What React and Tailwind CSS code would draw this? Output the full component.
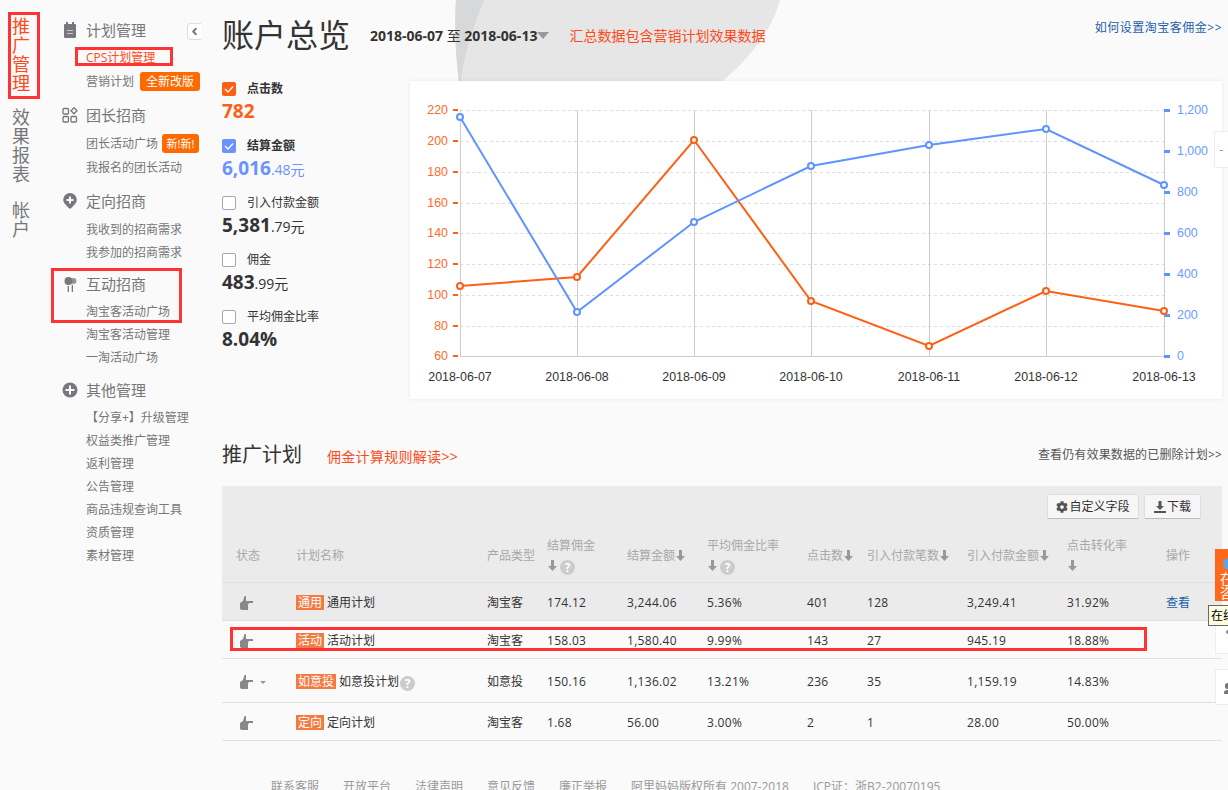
import { ChevronLeft } from "lucide-react";
import { FaCog } from "react-icons/fa";

const FONT = { fontFamily: '"Open Sans", "Noto Sans CJK SC", sans-serif' };

const navGroups = [
  { title: "计划管理", icon: "plan", mt: "mt-0", head: "h-[30px]", items: [
    { label: "CPS计划管理", active: true },
    { label: "营销计划", badge: "全新改版" },
  ] },
  { title: "团长招商", icon: "grid", mt: "mt-[7px]", head: "h-[30px]", items: [
    { label: "团长活动广场", badge: "新!新!", tight: true },
    { label: "我报名的团长活动" },
  ] },
  { title: "定向招商", icon: "pin", mt: "mt-[7px]", head: "h-[32px]", items: [
    { label: "我收到的招商需求" },
    { label: "我参加的招商需求" },
  ] },
  { title: "互动招商", icon: "balloon", mt: "mt-[6px]", head: "h-[30px]", items: [
    { label: "淘宝客活动广场" },
    { label: "淘宝客活动管理" },
    { label: "一淘活动广场" },
  ] },
  { title: "其他管理", icon: "plus", mt: "mt-[7px]", head: "h-[30px]", items: [
    { label: "【分享+】升级管理" },
    { label: "权益类推广管理" },
    { label: "返利管理" },
    { label: "公告管理" },
    { label: "商品违规查询工具" },
    { label: "资质管理" },
    { label: "素材管理" },
  ] },
];

const stats = [
  { label: "点击数", on: "bg-[#ff5f15]", big: "782", small: "", color: "text-[#ff5f15]", bold: true },
  { label: "结算金额", on: "bg-[#6a93ff]", big: "6,016", small: ".48元", color: "text-[#6a93ff]", bold: true },
  { label: "引入付款金额", big: "5,381", small: ".79元", color: "text-[#333]" },
  { label: "佣金", big: "483", small: ".99元", color: "text-[#333]" },
  { label: "平均佣金比率", big: "8.04%", small: "", color: "text-[#333]" },
];

const rows = [
  { tag: "通用", name: "通用计划", type: "淘宝客", vals: ["174.12", "3,244.06", "5.36%", "401", "128", "3,249.41", "31.92%"], op: "查看", h: "h-[38px]", bg: "bg-[#ebebeb]" },
  { tag: "活动", name: "活动计划", type: "淘宝客", vals: ["158.03", "1,580.40", "9.99%", "143", "27", "945.19", "18.88%"], h: "h-[38px]" },
  { tag: "如意投", name: "如意投计划", type: "如意投", vals: ["150.16", "1,136.02", "13.21%", "236", "35", "1,159.19", "14.83%"], h: "h-[44px]", caret: true, help: true },
  { tag: "定向", name: "定向计划", type: "淘宝客", vals: ["1.68", "56.00", "3.00%", "2", "1", "28.00", "50.00%"], h: "h-[38px]" },
];

const footerLinks = ["联系客服", "开放平台", "法律声明", "意见反馈", "廉正举报", "阿里妈妈版权所有 2007-2018", "ICP证：浙B2-20070195"];

function NavIcon({ name }) {
  const cls = "w-[16px] h-[16px] text-[#77777c]";
  if (name === "plan") {
    return (
      <svg viewBox="0 0 16 16" className={cls} fill="currentColor">
        <path d="M4 0h2v2h4V0h2v2h1a1 1 0 0 1 1 1v12a1 1 0 0 1-1 1H3a1 1 0 0 1-1-1V3a1 1 0 0 1 1-1h1z" />
        <path d="M5 8h6v1H5zM5 11h6v1H5z" fill="#c8c8c8" />
      </svg>
    );
  }
  if (name === "grid") {
    return (
      <svg viewBox="0 0 16 16" className={cls} fill="none" stroke="currentColor" strokeWidth="1.3">
        <rect x="1" y="1.5" width="5.5" height="5.5" rx="1" />
        <path d="M12 .8l3 3-3 3-3-3z" />
        <rect x="1" y="9.5" width="5.5" height="5.5" rx="1" />
        <rect x="9" y="9.5" width="5.5" height="5.5" rx="1" />
      </svg>
    );
  }
  if (name === "pin") {
    return (
      <svg viewBox="0 0 16 16" className={cls} fill="currentColor">
        <path d="M8 0a6.800 6.800 0 0 1 6.800 6.800C14.800 10 11 13.500 8 16 5 13.500 1.200 10 1.200 6.800A6.800 6.800 0 0 1 8 0z" />
        <path d="M7 3.500h2V6h2.500v2H9v2.500H7V8H4.500V6H7z" fill="#fafafa" />
      </svg>
    );
  }
  if (name === "balloon") {
    return (
      <svg viewBox="0 0 16 16" className={cls} fill="currentColor">
        <circle cx="11.500" cy="5" r="3" opacity="0.75" />
        <circle cx="6.500" cy="5" r="4" />
        <path d="M5.700 10h1.300v6H5.700zM9.700 9h1.300v7H9.700z" />
      </svg>
    );
  }
  return (
    <svg viewBox="0 0 16 16" className={cls} fill="currentColor">
      <circle cx="8" cy="8" r="7.500" />
      <path d="M7 3.500h2V7h3.500v2H9v3.500H7V9H3.500V7H7z" fill="#fafafa" />
    </svg>
  );
}

function NavGroup({ group }) {
  return (
    <div className={group.mt}>
      <div className={`flex items-center pb-[2px] text-[15px] text-[#777] ${group.head}`}>
        <span className="w-[24px] flex"><NavIcon name={group.icon} /></span>
        {group.title}
      </div>
      {group.items.map((item) => (
        <div key={item.label} className={`flex items-center pl-[24px] text-[12px] whitespace-nowrap ${item.badge ? "h-[25px]" : "h-[23px]"} ${item.active ? "text-[#ff4a1a]" : "text-[#777]"}`}>
          {item.label}
          {item.badge && (
            <span className={`bg-[#ff6a00] text-white rounded-[3px] h-[19px] leading-[19px] text-center ${item.tight ? "ml-[4px] w-[37px] text-[11px]" : "ml-[6px] w-[60px]"}`}>
              {item.badge}
            </span>
          )}
        </div>
      ))}
    </div>
  );
}

function CheckBox({ on }) {
  if (on) {
    return (
      <span className={`w-[14px] h-[14px] rounded-[2px] flex items-center justify-center ${on}`}>
        <svg viewBox="0 0 14 14" className="w-[14px] h-[14px]" fill="none" stroke="#fff" strokeWidth="1.300">
          <path d="M3 7l3 3 5-5.500" />
        </svg>
      </span>
    );
  }
  return <span className="w-[14px] h-[14px] rounded-[2px] border border-[#a5a5b5] bg-white" />;
}

function Stat({ stat }) {
  return (
    <div className="h-[57px]">
      <div className="flex items-center h-[15px]">
        <CheckBox on={stat.on} />
        <span className={`ml-[11px] text-[12px] text-[#333] ${stat.bold ? "font-bold" : ""}`}>{stat.label}</span>
      </div>
      <div className={`mt-[3px] h-[24px] leading-[24px] whitespace-nowrap ${stat.color}`}>
        <span className="text-[19px] font-bold">{stat.big}</span>
        <span className="text-[14px]">{stat.small}</span>
      </div>
    </div>
  );
}

const xs = [460, 577, 694, 811, 929, 1046, 1164];
const labels = ["2018-06-07", "2018-06-08", "2018-06-09", "2018-06-10", "2018-06-11", "2018-06-12", "2018-06-13"];
const orange = [286, 277, 140, 301, 346, 291, 311];
const blue = [117, 312, 222, 166, 145, 129, 185];
const leftTicks = [[220, 110], [200, 141], [180, 172], [160, 203], [140, 233], [120, 264], [100, 295], [80, 326], [60, 356]];
const rightTicks = [["1,200", 110], ["1,000", 151], ["800", 192], ["600", 233], ["400", 274], ["200", 315], ["0", 356]];

function Chart() {
  const line = (ys) => xs.map((x, i) => `${x},${ys[i]}`).join(" ");
  return (
    <svg viewBox="410 81 812 318" className="w-[812px] h-[318px] block" style={{ fontFamily: '"Liberation Sans", sans-serif', fontSize: 12.4 }}>
      {leftTicks.map(([v, y]) => (
        <g key={v}>
          {y !== 356 && <line x1="460" x2="1164" y1={y + 0.5} y2={y + 0.5} stroke="#ddd" strokeDasharray="3 3" />}
          <rect x="453" y={y - 1} width="5" height="2" fill="#ff5f15" />
          <text x="448" y={y + 4} textAnchor="end" fill="#ff6a2a">{v}</text>
        </g>
      ))}
      {xs.map((x) => <line key={x} x1={x + 0.5} x2={x + 0.5} y1="110" y2="356" stroke="#ccc" />)}
      <line x1="460" x2="1164" y1="356.500" y2="356.500" stroke="#ccc" />
      {rightTicks.map(([v, y]) => (
        <g key={v}>
          <rect x="1164" y={y - 1} width="6" height="3" fill="#5f93ff" />
          <text x="1177" y={y + 4} fill="#6a9bff">{v}</text>
        </g>
      ))}
      {labels.map((l, i) => <text key={l} x={xs[i]} y="381" textAnchor="middle" fill="#333">{l}</text>)}
      <polyline points={line(orange)} fill="none" stroke="#ff5f15" strokeWidth="2" />
      <polyline points={line(blue)} fill="none" stroke="#5f93ff" strokeWidth="2" />
      {xs.map((x, i) => <circle key={x} cx={x} cy={orange[i]} r="3" fill="#fff" stroke="#ff5f15" strokeWidth="2" />)}
      {xs.map((x, i) => <circle key={x} cx={x} cy={blue[i]} r="3" fill="#fff" stroke="#5f93ff" strokeWidth="2" />)}
    </svg>
  );
}

function SortArrow() {
  return (
    <svg viewBox="0 0 9 11" className="inline-block w-[9px] h-[11px] align-[-1px] ml-[1px]" fill="#999">
      <path d="M3 0h3v6h3L4.500 11 0 6h3z" />
    </svg>
  );
}

function Help() {
  return (
    <span className="inline-flex items-center justify-center w-[15px] h-[15px] rounded-full bg-[#ccc] text-white text-[12px] font-bold leading-none align-[-2px]">?</span>
  );
}

function Hand() {
  return (
    <svg viewBox="0 0 13 14" className="w-[13px] h-[14px]" fill="#888">
      <path d="M4.500 0h1.500v5h7v2H8.500v1.500H8V14H1.500L0 13V7l3-2z" />
    </svg>
  );
}

function PlanTable() {
  const heads = [
    { t: "状态", cls: "pl-[14px]" },
    { t: "计划名称" },
    { t: "产品类型" },
    { t: "结算佣金", wrap: true, help: true },
    { t: "结算金额", arrow: true },
    { t: "平均佣金比率", wrap: true, help: true },
    { t: "点击数", arrow: true },
    { t: "引入付款笔数", arrow: true },
    { t: "引入付款金额", arrow: true },
    { t: "点击转化率", wrap: true },
    { t: "操作" },
  ];
  const widths = ["w-[74px]", "w-[191px]", "w-[60px]", "w-[80px]", "w-[80px]", "w-[100px]", "w-[60px]", "w-[100px]", "w-[100px]", "w-[99px]", "w-[56px]"];
  return (
    <table className="w-[1000px] table-fixed border-collapse text-[12px] text-[#333]">
      <colgroup>
        {widths.map((w, i) => <col key={i} className={w} />)}
      </colgroup>
      <thead>
        <tr className="h-[56px] bg-[#ebebeb] border-b border-[#e0e0e0] text-[#a8a8a8] text-left">
          {heads.map((h) => (
            <th key={h.t} className={`font-normal leading-[20px] pt-[4px] ${h.cls || ""}`}>
              {h.t}
              {h.wrap && <br />}
              {(h.arrow || h.wrap) && <SortArrow />}
              {h.help && <span className="ml-[3px]"><Help /></span>}
            </th>
          ))}
        </tr>
      </thead>
      <tbody>
        {rows.map((r) => (
          <tr key={r.name} className={`${r.h} ${r.bg || ""} border-b border-[#e0e0e0]`}>
            <td className="pl-[18px] pt-[4px]">
              <div className="flex items-center">
                <Hand />
                {r.caret && <span className="ml-[7px] w-0 h-0 border-x-[3px] border-x-transparent border-t-[3px] border-t-[#999]" />}
              </div>
            </td>
            <td className="pt-[4px]">
              <span className="inline-block bg-[#f47a42] text-white px-[2px] h-[15px] leading-[15px] mr-[3px]">{r.tag}</span>
              {r.name}
              {r.help && <span className="ml-[1px]"><Help /></span>}
            </td>
            <td className="pt-[4px]">{r.type}</td>
            {r.vals.map((v, i) => <td key={i} className="pt-[4px] tracking-[0.3px]">{v}</td>)}
            <td className="pt-[4px] text-[#1f5fa8]">{r.op}</td>
          </tr>
        ))}
      </tbody>
    </table>
  );
}

export default function App() {
  return (
    <div className="relative w-[1228px] h-[790px] overflow-hidden bg-[#fafafa] flex" style={FONT}>
      {/* background swoosh */}
      <svg className="absolute left-[450px] top-0 w-[340px] h-[90px]" viewBox="450 0 340 90">
        <path d="M456 0C454 30 456 60 460 90H712C750 60 772 30 780 0z" fill="#e6e6e6" />
        <path d="M456 0C454 30 456 60 460 90C462 60 472 30 484 0z" fill="#d6d8da" />
      </svg>

      <div className="w-[12px] shrink-0" />
      <div className="w-[38px] shrink-0 pt-[17px] text-[18px] leading-[19px] text-[#777]">
        <div className="w-[18px] break-all text-[#ff4a1a]">推广管理</div>
        <div className="w-[18px] break-all mt-[15px]">效果报表</div>
        <div className="w-[18px] break-all mt-[17px]">帐户</div>
      </div>

      <div className="w-[152px] shrink-0 pl-[12px] pt-[16px]">
        {navGroups.map((g) => <NavGroup key={g.title} group={g} />)}
      </div>

      <div className="relative w-[1000px] shrink-0 ml-[20px] pt-[14px]">
        <div className="flex items-center h-[42px] whitespace-nowrap">
          <h1 className="text-[32px] text-[#333] font-normal">账户总览</h1>
          <span className="ml-[20px] text-[14px] font-bold text-[#333]">2018-06-07 <span className="font-normal">至</span> 2018-06-13</span>
          <span className="w-0 h-0 border-x-[6px] border-x-transparent border-t-[7px] border-t-[#999]" />
          <span className="ml-[20px] text-[14px] text-[#ff4a1a]">汇总数据包含营销计划效果数据</span>
          <a className="ml-auto self-start mt-[5px] text-[12px] text-[#1f5fa8] tracking-[0.5px]">如何设置淘宝客佣金&gt;&gt;</a>
        </div>

        <div className="relative flex mt-[25px]">
          <div className="w-[188px] shrink-0">
            {stats.map((s) => <Stat key={s.label} stat={s} />)}
          </div>
          <div className="bg-white shadow-[0_0_4px_rgba(0,0,0,0.08)]">
            <Chart />
          </div>
        </div>

        <div className="flex items-center h-[28px] mt-[42px] whitespace-nowrap">
          <h2 className="text-[20px] text-[#333] font-normal">推广计划</h2>
          <a className="ml-[25px] mt-[3px] text-[14px] text-[#ff4a1a] tracking-[0.3px]">佣金计算规则解读&gt;&gt;</a>
          <a className="ml-auto text-[12px] text-[#555] tracking-[0.15px]">查看仍有效果数据的已删除计划&gt;&gt;</a>
        </div>

        <div className="mt-[17px]">
          <div className="bg-[#ebebeb] h-[40px] pt-[8px] pr-[21px] flex justify-end gap-[5px]">
            <button className="h-[25px] w-[92px] flex items-center justify-center bg-[#f6f6f6] border border-[#ddd] border-b-[#bbb] text-[12px] text-[#333] rounded-[2px]">
              <FaCog className="w-[12px] h-[12px] mr-[1px] text-[#555]" />自定义字段
            </button>
            <button className="h-[25px] w-[57px] flex items-center justify-center bg-[#f6f6f6] border border-[#ddd] border-b-[#bbb] text-[12px] text-[#333] rounded-[2px]">
              <svg viewBox="0 0 12 12" className="w-[12px] h-[12px] mr-[1px]" fill="#555">
                <path d="M4.500 0h3v5H10L6 9 2 5h2.500zM0 10h12v2H0z" />
              </svg>
              下载
            </button>
          </div>
          <PlanTable />
        </div>

        <div className="flex gap-[24px] mt-[37px] pl-[49px] text-[12px] text-[#999] whitespace-nowrap">
          {footerLinks.map((f) => <span key={f}>{f}</span>)}
        </div>
      </div>

      {/* annotation boxes */}
      <div className="absolute left-[8px] top-[12px] w-[32px] h-[87px] border-[3px] border-[#ff3333]" />
      <div className="absolute left-[75px] top-[47px] w-[98px] h-[19px] border-[3px] border-[#ff3333]" />
      <div className="absolute left-[51px] top-[268px] w-[131px] h-[55px] border-[3px] border-[#ff3333]" />
      <div className="absolute left-[230px] top-[627px] w-[917px] h-[24px] border-[3px] border-[#ff3333]" />

      {/* sidebar collapse */}
      <div className="absolute left-[187px] top-[23px] w-[14px] h-[17px] bg-white border border-r-0 border-[#ddd] rounded-l-[4px] flex items-center justify-center">
        <ChevronLeft className="w-[11px] h-[11px] text-[#777]" strokeWidth={4} />
      </div>

      {/* floating right tabs */}
      <div className="absolute left-[1214px] top-[131px] w-[14px] h-[37px] bg-white border border-r-0 border-[#eee] flex items-center justify-center text-[#ff6a2a] text-[12px]">
        -
      </div>
      <div className="absolute left-[1215px] top-[549px] w-[40px] h-[52px] bg-[#ff6a1a] text-white text-[14px] leading-[14px] pt-[23px] pl-[5px] pr-[7px] overflow-hidden">
        <span className="absolute left-[8px] top-[9px] w-[12px] h-[12px] rounded-full bg-[#5aa7e8]" />
        在线咨询
      </div>
      <div className="absolute left-[1215px] top-[620px] w-[13px] h-[34px] bg-white border-l border-b border-[#eee]">
        <span className="absolute left-[10px] top-[10px] w-[4px] h-[4px] rounded-full bg-[#888]" />
      </div>
      <div className="absolute left-[1215px] top-[669px] w-[13px] h-[36px] bg-white border border-r-0 border-[#eee]">
        <span className="absolute left-[9px] top-[13px] w-[5px] h-[6px] rounded-full bg-[#777]" />
        <span className="absolute left-[8px] top-[20px] w-[6px] h-[4px] rounded-t-[3px] bg-[#777]" />
      </div>
      <div className="absolute left-[1208px] top-[605px] w-[30px] h-[21px] bg-[#ffffe1] border border-[#666] text-[12px] text-black leading-[19px] pl-[2px] whitespace-nowrap overflow-hidden">
        在线咨询
      </div>
    </div>
  );
}
